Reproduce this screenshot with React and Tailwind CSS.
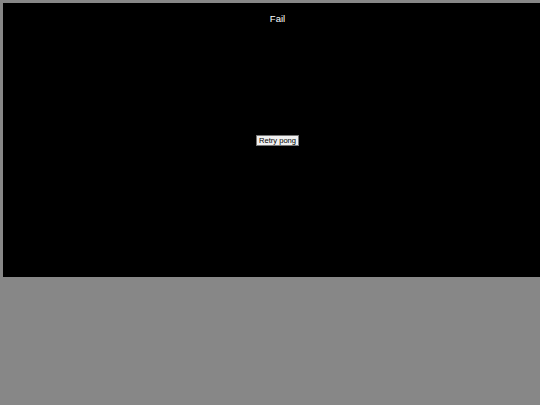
export default function App() {
  return (
    <div className="w-[540px] h-[405px] bg-[#878787] overflow-hidden pt-[3px] pl-[3px]" style={{ fontFamily: '"Liberation Sans", Arial, sans-serif' }}>
      <div className="w-[549px] h-[274px] bg-black flex flex-col items-center">
        <div className="mt-[10px] text-white text-[9.5px] leading-[12px]">Fail</div>
        <button className="mt-[110px] w-[43px] h-[11px] bg-[#f0f0f0] border border-[#767676] text-black text-[7.6px] leading-[9px] flex items-center justify-center p-0 whitespace-nowrap">Retry pong</button>
      </div>
    </div>
  );
}
